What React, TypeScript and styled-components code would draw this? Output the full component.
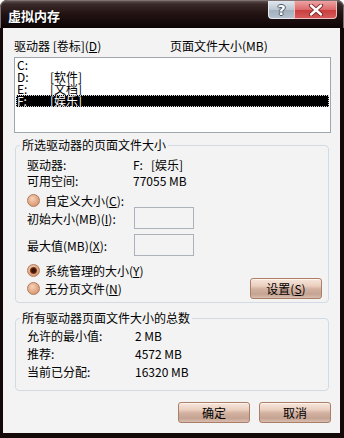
import styled, { createGlobalStyle, css } from "styled-components";

const GlobalStyle = createGlobalStyle`
    html, body {
        margin: 0;
        padding: 0;
        background: #ffffff;
    }
    body {
        font-family: "Noto Sans CJK SC", "Noto Sans", sans-serif;
        font-size: 12px;
        color: #000;
    }
`;

const Window = styled.div`
    width: 344px;
    height: 438px;
    display: flex;
    flex-direction: column;
    background: #140909;
    border-radius: 7px 7px 0 0;
    overflow: hidden;
`;

const TitleBar = styled.div`
    height: 28px;
    flex: none;
    box-sizing: border-box;
    display: flex;
    align-items: flex-start;
    border: 1px solid #7d7171;
    border-bottom: none;
    border-radius: 7px 7px 0 0;
    background: linear-gradient(#5e5050 0, #3a2a2a 3px, #241414 45%, #0e0404 100%);
`;

const Title = styled.div`
    color: #fff;
    font-weight: bold;
    font-size: 13px;
    line-height: 18px;
    margin: 6px 0 0 7px;
    text-shadow: 1px 1px 0 #000;
`;

const CaptionButtons = styled.div`
    margin-left: auto;
    margin-right: 6px;
    display: flex;
`;

const captionBase = css`
    height: 18px;
    box-sizing: border-box;
    display: flex;
    align-items: center;
    justify-content: center;
    border: 1px solid #e6ecf2;
    border-top: none;
`;

const HelpButton = styled.div`
    ${captionBase};
    width: 26px;
    border-radius: 0 0 0 4px;
    border-right: none;
    background: linear-gradient(#e0e7ee, #bcc7d2 50%, #a0aebc 51%, #b4c0cc);
    color: #fff;
    font-family: "DejaVu Sans", sans-serif;
    font-weight: bold;
    font-size: 14px;
    text-shadow: -1px 0 #4a5664, 1px 0 #4a5664, 0 -1px #4a5664, 0 1px #4a5664;
`;

const CloseButton = styled.div`
    ${captionBase};
    width: 43px;
    border-radius: 0 0 4px 0;
    border-color: #f0c0c0;
    background: linear-gradient(#eca4a4, #dc6a6a 50%, #c83c3c 51%, #d65a5a);
`;

const Body = styled.div`
    flex: 1;
    margin: 0 4px 5px 3px;
    padding: 11px 9px 0 11px;
    background: #f3f3f3;
    display: flex;
    flex-direction: column;
`;

const U = styled.span`
    text-decoration: underline;
`;

const HeaderRow = styled.div`
    display: flex;
    line-height: 14px;
    height: 14px;
`;

const HeaderCell = styled.div<{ $width?: number }>`
    width: ${(p) => (p.$width ? `${p.$width}px` : "auto")};
    white-space: nowrap;
`;

const ListBox = styled.div`
    margin-top: 4px;
    height: 76px;
    box-sizing: border-box;
    border: 1px solid #9ea6ae;
    background: #fff;
    padding: 1px;
`;

const ListRow = styled.div<{ $selected?: boolean }>`
    display: grid;
    grid-template-columns: 33px 1fr;
    height: 12px;
    line-height: 12px;
    padding-left: 1px;
    white-space: nowrap;
    ${(p) =>
        p.$selected &&
        css`
            background: #000;
            color: #fff;
            outline: 1px dotted #d8d8d8;
            outline-offset: -1px;
        `}
`;

const Group = styled.fieldset<{ $gap: number }>`
    margin: ${(p) => p.$gap}px 2px 0 1px;
    border: 1px solid #d0dbe3;
    border-radius: 4px;
    padding: 0 4px 4px 4px;
    min-width: 0;
`;

const Legend = styled.legend`
    padding: 0 2px;
    line-height: 14px;
`;

const GroupContent = styled.div<{ $top: number; $bottom: number }>`
    padding: ${(p) => p.$top}px 0 ${(p) => p.$bottom}px 7px;
    display: flex;
    flex-direction: column;
`;

const InfoRow = styled.div<{ $label: number; $height: number }>`
    display: grid;
    grid-template-columns: ${(p) => p.$label}px auto;
    height: ${(p) => p.$height}px;
    line-height: ${(p) => p.$height}px;
    white-space: nowrap;
`;

const RadioRow = styled.div<{ $top: number }>`
    display: flex;
    align-items: center;
    gap: 5px;
    height: 14px;
    margin-top: ${(p) => p.$top}px;
    white-space: nowrap;
`;

const Radio = styled.span<{ $checked?: boolean }>`
    width: 13px;
    height: 13px;
    flex: none;
    box-sizing: border-box;
    border-radius: 50%;
    border: 1px solid #b27b5c;
    background: radial-gradient(circle at 40% 35%, #f6d2ba, #dc9c76 70%, #c8845e);
    display: flex;
    align-items: center;
    justify-content: center;
    ${(p) =>
        p.$checked &&
        css`
            &::after {
                content: "";
                width: 7px;
                height: 7px;
                border-radius: 50%;
                background: radial-gradient(circle, #3a1406 35%, #7a3c1e 65%, #c07a56);
            }
        `}
`;

const SizeRow = styled.div<{ $top: number }>`
    display: grid;
    grid-template-columns: 107px 60px;
    align-items: center;
    height: 22px;
    margin-top: ${(p) => p.$top}px;
    white-space: nowrap;
`;

const TextBox = styled.input`
    width: 60px;
    height: 22px;
    box-sizing: border-box;
    border: 1px solid #abb2ba;
    background: transparent;
    margin: 0;
    padding: 0;
`;

const LastRow = styled.div`
    display: flex;
    align-items: center;
    height: 20px;
    margin-top: 1px;
    padding-right: 2px;
`;

const RadioLabel = styled.div`
    display: flex;
    align-items: center;
    gap: 5px;
    white-space: nowrap;
`;

const PushButton = styled.button<{ $push?: boolean }>`
    width: 72px;
    height: 21px;
    box-sizing: border-box;
    padding: 0;
    font-family: inherit;
    font-size: 12px;
    color: #000;
    border: 1px solid #ab7e68;
    border-radius: 3px;
    background: linear-gradient(#f6e6dc 0%, #ebd0c0 35%, #d4b2a2 52%, #c5a393 80%, #d9bdaf 100%);
    box-shadow: inset 0 1px 0 #fff3ec;
    margin-left: ${(p) => (p.$push ? "auto" : "0")};
`;

const ButtonRow = styled.div`
    display: flex;
    justify-content: flex-end;
    gap: 9px;
    margin-top: 11px;
`;

export default function App() {
    return (
        <>
            <GlobalStyle />
            <Window>
                <TitleBar>
                    <Title>虚拟内存</Title>
                    <CaptionButtons>
                        <HelpButton>?</HelpButton>
                        <CloseButton>
                            <svg width="16" height="12" viewBox="0 0 16 12">
                                <path d="M3 1.5 L13 10.5 M13 1.5 L3 10.5" stroke="#7a2020" strokeWidth="4.2" strokeLinecap="round" />
                                <path d="M3 1.5 L13 10.5 M13 1.5 L3 10.5" stroke="#fff" strokeWidth="2.4" strokeLinecap="round" />
                            </svg>
                        </CloseButton>
                    </CaptionButtons>
                </TitleBar>
                <Body>
                    <HeaderRow>
                        <HeaderCell $width={156}>
                            驱动器 [卷标](<U>D</U>)
                        </HeaderCell>
                        <HeaderCell>页面文件大小(MB)</HeaderCell>
                    </HeaderRow>
                    <ListBox>
                        <ListRow>
                            <span>C:</span>
                            <span />
                        </ListRow>
                        <ListRow>
                            <span>D:</span>
                            <span>[软件]</span>
                        </ListRow>
                        <ListRow>
                            <span>E:</span>
                            <span>[文档]</span>
                        </ListRow>
                        <ListRow $selected>
                            <span>F:</span>
                            <span>[娱乐]</span>
                        </ListRow>
                    </ListBox>

                    <Group $gap={5}>
                        <Legend>所选驱动器的页面文件大小</Legend>
                        <GroupContent $top={5} $bottom={0}>
                            <InfoRow $label={106} $height={16}>
                                <span>驱动器:</span>
                                <span>F:&nbsp;&nbsp;&nbsp;[娱乐]</span>
                            </InfoRow>
                            <InfoRow $label={106} $height={16}>
                                <span>可用空间:</span>
                                <span>77055 MB</span>
                            </InfoRow>
                            <RadioRow $top={4}>
                                <Radio />
                                <span>
                                    自定义大小(<U>C</U>):
                                </span>
                            </RadioRow>
                            <SizeRow $top={0}>
                                <span>
                                    初始大小(MB)(<U>I</U>):
                                </span>
                                <TextBox disabled />
                            </SizeRow>
                            <SizeRow $top={5}>
                                <span>
                                    最大值(MB)(<U>X</U>):
                                </span>
                                <TextBox disabled />
                            </SizeRow>
                            <RadioRow $top={7}>
                                <Radio $checked />
                                <span>
                                    系统管理的大小(<U>Y</U>)
                                </span>
                            </RadioRow>
                            <LastRow>
                                <RadioLabel>
                                    <Radio />
                                    <span>
                                        无分页文件(<U>N</U>)
                                    </span>
                                </RadioLabel>
                                <PushButton $push>
                                    设置(<U>S</U>)
                                </PushButton>
                            </LastRow>
                        </GroupContent>
                    </Group>

                    <Group $gap={8}>
                        <Legend>所有驱动器页面文件大小的总数</Legend>
                        <GroupContent $top={2} $bottom={5}>
                            <InfoRow $label={108} $height={18}>
                                <span>允许的最小值:</span>
                                <span>2 MB</span>
                            </InfoRow>
                            <InfoRow $label={108} $height={18}>
                                <span>推荐:</span>
                                <span>4572 MB</span>
                            </InfoRow>
                            <InfoRow $label={108} $height={18}>
                                <span>当前已分配:</span>
                                <span>16320 MB</span>
                            </InfoRow>
                        </GroupContent>
                    </Group>

                    <ButtonRow>
                        <PushButton>确定</PushButton>
                        <PushButton>取消</PushButton>
                    </ButtonRow>
                </Body>
            </Window>
        </>
    );
}
